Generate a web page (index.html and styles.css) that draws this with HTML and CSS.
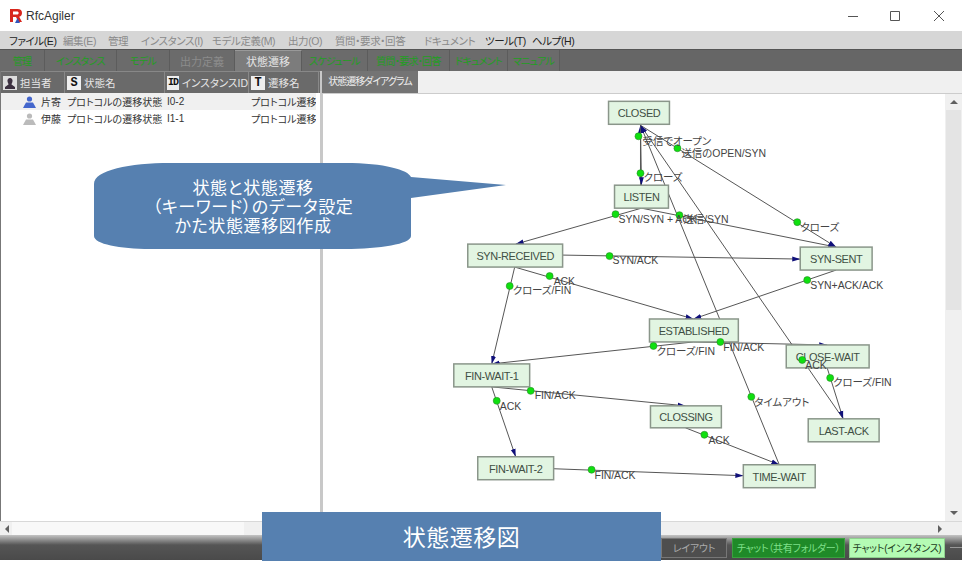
FILE: index.html
```html
<!DOCTYPE html>
<html>
<head>
    <meta charset="utf-8">
    <title>RfcAgiler</title>
    <link rel="stylesheet" href="styles.css">
</head>
<body>
<div class="window">
    <div class="titlebar">
        <svg class="logo" width="14" height="16" viewBox="0 0 14 16">
            <path d="M1 1h7.5c3 0 4.5 1.600 4.500 4 0 2-1 3.300-2.800 3.800L13 14H9.500L7 9H4v5H1z" fill="#d8261c"/>
            <path d="M4 3.500v3h4c1 0 1.700-.6 1.700-1.500S9 3.500 8 3.500z" fill="#fff"/>
            <path d="M6 15l2.500-5 2.500 5z" fill="#3355bb"/>
        </svg>
        <span class="app-name">RfcAgiler</span>
        <div class="window-buttons">
            <svg width="10" height="10" viewBox="0 0 10 10"><path d="M0 5.500h10" stroke="#555" fill="none"/></svg>
            <svg width="10" height="10" viewBox="0 0 10 10"><path d="M.5.500h9v9h-9z" stroke="#555" fill="none"/></svg>
            <svg width="10" height="10" viewBox="0 0 10 10"><path d="M0 0l10 10M10 0L0 10" stroke="#555" fill="none"/></svg>
        </div>
    </div>

    <div class="menubar">
        <span class="on">ファイル(E)</span>
        <span>編集(E)</span>
        <span>管理</span>
        <span>インスタンス(I)</span>
        <span>モデル定義(M)</span>
        <span>出力(O)</span>
        <span>質問・要求・回答</span>
        <span>ドキュメント</span>
        <span class="on">ツール(T)</span>
        <span class="on">ヘルプ(H)</span>
    </div>

    <div class="tabbar">
        <div class="tab">管理</div>
        <div class="tab">インスタンス</div>
        <div class="tab">モデル</div>
        <div class="tab disabled">出力定義</div>
        <div class="tab active">状態遷移</div>
        <div class="tab">スケジュール</div>
        <div class="tab">質問・要求・回答</div>
        <div class="tab">ドキュメント</div>
        <div class="tab">マニュアル</div>
    </div>

    <div class="main">
        <div class="left-pane">
            <div class="list-head">
                <div class="head-cell">
                    <svg class="head-icon" width="14" height="14" viewBox="0 0 14 14">
                        <rect width="14" height="14" fill="#ddd"/>
                        <path d="M7 2a2.500 2.500 0 0 1 2.500 3c0 1.500-1 2.500-1 3.500L12 11v2H2v-2l3.500-2.500c0-1-1-2-1-3.500A2.500 2.500 0 0 1 7 2z" fill="#3c3040"/>
                    </svg>
                    担当者
                </div>
                <div class="head-cell"><span class="head-badge">S</span>状態名</div>
                <div class="head-cell"><span class="head-badge small">ID</span>インスタンスID</div>
                <div class="head-cell"><span class="head-badge">T</span>遷移名</div>
            </div>
            <div class="list-row selected">
                <svg class="person" width="13" height="12" viewBox="0 0 13 12">
                    <circle cx="6.500" cy="3" r="2.600" fill="#4466cc"/>
                    <path d="M0 12l3-5.500h7l3 5.500z" fill="#4466cc"/>
                </svg>
                <span class="who">片寄</span>
                <span class="state">プロトコルの遷移状態</span>
                <span class="inst">I0-2</span>
                <span class="trans">プロトコル遷移</span>
            </div>
            <div class="list-row">
                <svg class="person" width="13" height="12" viewBox="0 0 13 12">
                    <circle cx="6.500" cy="3" r="2.600" fill="#bbb"/>
                    <path d="M0 12l3-5.500h7l3 5.500z" fill="#bbb"/>
                </svg>
                <span class="who">伊藤</span>
                <span class="state">プロトコルの遷移状態</span>
                <span class="inst">I1-1</span>
                <span class="trans">プロトコル遷移</span>
            </div>
        </div>

        <div class="right-pane">
            <div class="subtabs">
                <div class="subtab">状態遷移ダイアグラム</div>
            </div>
            <div class="diagram-wrap">
                <svg class="diagram" width="622" height="427" viewBox="323 94 622 427">
                    <defs>
                        <marker id="arrow" markerWidth="8" markerHeight="6" refX="8" refY="3" orient="auto" markerUnits="userSpaceOnUse">
                            <path d="M0 .5L8 3L0 5.500z" fill="#10107a"/>
                        </marker>
                    </defs>

                    <g class="edges">
                        <line x1="640" y1="185" x2="640" y2="125" marker-end="url(#arrow)"/>
                        <line x1="640" y1="125" x2="641" y2="185" marker-end="url(#arrow)"/>
                        <line x1="640" y1="125" x2="836" y2="247" marker-end="url(#arrow)"/>
                        <line x1="641" y1="208" x2="515" y2="244" marker-end="url(#arrow)"/>
                        <line x1="641" y1="208" x2="836" y2="247" marker-end="url(#arrow)"/>
                        <line x1="779" y1="465" x2="640" y2="125" marker-end="url(#arrow)"/>
                        <line x1="843" y1="419" x2="640" y2="125" marker-end="url(#arrow)"/>
                        <line x1="562" y1="255" x2="800" y2="259" marker-end="url(#arrow)"/>
                        <line x1="514" y1="267" x2="693" y2="319" marker-end="url(#arrow)"/>
                        <line x1="514" y1="267" x2="491" y2="364" marker-end="url(#arrow)"/>
                        <line x1="836" y1="270" x2="693" y2="319" marker-end="url(#arrow)"/>
                        <line x1="693" y1="342" x2="491" y2="364" marker-end="url(#arrow)"/>
                        <line x1="693" y1="342" x2="827" y2="345" marker-end="url(#arrow)"/>
                        <line x1="827" y1="368" x2="843" y2="419" marker-end="url(#arrow)"/>
                        <line x1="491" y1="387" x2="685" y2="406" marker-end="url(#arrow)"/>
                        <line x1="491" y1="387" x2="515" y2="457" marker-end="url(#arrow)"/>
                        <line x1="685" y1="428" x2="779" y2="465" marker-end="url(#arrow)"/>
                        <line x1="553" y1="469" x2="743" y2="476" marker-end="url(#arrow)"/>
                    </g>

                    <g class="nodes">
                        <rect x="608" y="101" width="61" height="23"/>
                        <rect x="614" y="185" width="54" height="23"/>
                        <rect x="467" y="244" width="95" height="23"/>
                        <rect x="800" y="247" width="72" height="23"/>
                        <rect x="649" y="319" width="89" height="23"/>
                        <rect x="786" y="345" width="83" height="23"/>
                        <rect x="453" y="364" width="76" height="23"/>
                        <rect x="650" y="406" width="71" height="22"/>
                        <rect x="477" y="457" width="76" height="23"/>
                        <rect x="743" y="465" width="72" height="23"/>
                        <rect x="808" y="419" width="71" height="23"/>
                    </g>

                    <g class="node-names">
                        <text x="638.500" y="117">CLOSED</text>
                        <text x="641" y="201">LISTEN</text>
                        <text x="514.500" y="260">SYN-RECEIVED</text>
                        <text x="836" y="263">SYN-SENT</text>
                        <text x="693.500" y="335">ESTABLISHED</text>
                        <text x="827.500" y="361">CLOSE-WAIT</text>
                        <text x="491" y="380">FIN-WAIT-1</text>
                        <text x="685.500" y="421">CLOSSING</text>
                        <text x="515" y="473">FIN-WAIT-2</text>
                        <text x="779" y="481">TIME-WAIT</text>
                        <text x="843.500" y="435">LAST-ACK</text>
                    </g>

                    <g class="dots">
                        <circle cx="638" cy="136" r="3.500"/>
                        <circle cx="677" cy="148" r="3.500"/>
                        <circle cx="640" cy="173" r="3.500"/>
                        <circle cx="615" cy="214" r="3.500"/>
                        <circle cx="679" cy="215" r="3.500"/>
                        <circle cx="797" cy="222" r="3.500"/>
                        <circle cx="609" cy="256" r="3.500"/>
                        <circle cx="549" cy="276" r="3.500"/>
                        <circle cx="509" cy="286" r="3.500"/>
                        <circle cx="807" cy="280" r="3.500"/>
                        <circle cx="653" cy="346" r="3.500"/>
                        <circle cx="720" cy="342" r="3.500"/>
                        <circle cx="802" cy="360" r="3.500"/>
                        <circle cx="830" cy="378" r="3.500"/>
                        <circle cx="530" cy="391" r="3.500"/>
                        <circle cx="496" cy="401" r="3.500"/>
                        <circle cx="751" cy="397" r="3.500"/>
                        <circle cx="704" cy="435" r="3.500"/>
                        <circle cx="591" cy="470" r="3.500"/>
                    </g>

                    <g class="edge-names">
                        <text x="642" y="145">受信でオープン</text>
                        <text x="681" y="157">送信のOPEN/SYN</text>
                        <text x="643" y="181">クローズ</text>
                        <text x="618" y="223">SYN/SYN + ACK</text>
                        <text x="683" y="223">送信/SYN</text>
                        <text x="800" y="231">クローズ</text>
                        <text x="612" y="264">SYN/ACK</text>
                        <text x="553" y="285">ACK</text>
                        <text x="512" y="294">クローズ/FIN</text>
                        <text x="810" y="289">SYN+ACK/ACK</text>
                        <text x="656" y="355">クローズ/FIN</text>
                        <text x="723" y="351">FIN/ACK</text>
                        <text x="805" y="369">ACK</text>
                        <text x="833" y="386">クローズ/FIN</text>
                        <text x="534" y="399">FIN/ACK</text>
                        <text x="499" y="410">ACK</text>
                        <text x="754" y="406">タイムアウト</text>
                        <text x="708" y="444">ACK</text>
                        <text x="594" y="479">FIN/ACK</text>
                    </g>
                </svg>
                <div class="vscroll">
                    <div class="scroll-btn"><span class="arrow-up"></span></div>
                    <div class="vthumb"></div>
                    <div class="vtrack"></div>
                    <div class="scroll-btn"><span class="arrow-down"></span></div>
                </div>
            </div>
        </div>
    </div>

    <div class="hscrolls">
        <div class="hscroll left">
            <span class="arrow-left"></span>
            <div class="hthumb"></div>
        </div>
        <div class="hscroll right">
            <span class="arrow-right"></span>
        </div>
    </div>

    <div class="statusbar">
        <div class="status-btn">レイアウト</div>
        <div class="status-btn chat">チャット（共有フォルダー）</div>
        <div class="status-btn chat-light">チャット(インスタンス)</div>
        <div class="status-dash"></div>
    </div>
</div>

<svg class="callout" width="414" height="88" viewBox="94 162 414 88">
    <path d="M94 184C94 170 130 163 170 163H345C385 163 408 170 411 177L506 185L411 198V236C411 244 380 249 345 249H150C120 249 94 244 94 236z" fill="#5680b0"/>
    <text x="253" y="194">状態と状態遷移</text>
    <text x="253" y="213">（キーワード）のデータ設定</text>
    <text x="253" y="232">かた状態遷移図作成</text>
</svg>

<div class="banner">状態遷移図</div>
</body>
</html>
```

FILE: styles.css
```css
html, body {
    margin: 0;
    padding: 0;
    background-color: #fff;
}

body {
    width: 962px;
    height: 563px;
    overflow: hidden;
    position: relative;
    font-family: "Liberation Sans", "Noto Sans CJK JP", sans-serif;
    font-feature-settings: "palt";
    font-size: 11px;
    color: #333;
}

.window {
    display: flex;
    flex-direction: column;
    height: 560px;
}

/* title */
.titlebar {
    display: flex;
    align-items: center;
    height: 31px;
    padding-left: 9px;
    flex-shrink: 0;
}

.logo {
    margin-right: 3px;
}

.app-name {
    font-size: 12px;
}

.window-buttons {
    margin-left: auto;
    display: grid;
    grid-template-columns: 42px 44px 10px;
    padding-right: 18px;
}

/* menu */
.menubar {
    display: grid;
    grid-template-columns: 54px 45px 33px 71px 76px 47px 89px 61px 47px 60px;
    align-items: center;
    height: 18px;
    padding-left: 9px;
    background-color: #d6d6d6;
    color: #8a8a8a;
    font-size: 10.5px;
    letter-spacing: -0.4px;
    white-space: nowrap;
    flex-shrink: 0;
}

.menubar .on {
    color: #222;
}

/* top tabs */
.tabbar {
    display: grid;
    grid-template-columns: 45px 72px 53px 65px 67px 66px 82px 58px 52px;
    height: 22px;
    background-color: #666;
    border-top: 1px solid #555;
    box-sizing: border-box;
    flex-shrink: 0;
}

.tab {
    display: flex;
    align-items: center;
    justify-content: center;
    color: #1f9e1f;
    background-color: #6b6b6b;
    border-right: 1px solid #5c5c5c;
    white-space: nowrap;
    font-size: 10px;
    letter-spacing: -0.7px;
}

.tab.disabled {
    color: #8c8c8c;
    font-size: 11px;
    letter-spacing: 0;
}

.tab.active {
    color: #e4e4e4;
    background-color: #7c7c7c;
    border-top: 1px solid #999;
    font-size: 11px;
    letter-spacing: 0;
}

/* panes */
.main {
    display: flex;
    flex: 1;
    min-height: 0;
    border-left: 1px solid #777;
}

.left-pane {
    width: 319px;
    border-right: 3px solid #c8c8c8;
    flex-shrink: 0;
}

.list-head {
    display: grid;
    grid-template-columns: 64px 100px 84px 70px;
    height: 22px;
    background-color: #6a6a6a;
    color: #e6e6e6;
    font-size: 10.5px;
    border-top: 1px solid #888;
    box-sizing: border-box;
}

.head-cell {
    display: flex;
    align-items: center;
    padding-left: 2px;
    border-right: 1px solid #888;
    white-space: nowrap;
}

.head-icon {
    margin-right: 3px;
}

.head-badge {
    display: inline-block;
    width: 14px;
    height: 14px;
    line-height: 14px;
    margin-right: 3px;
    text-align: center;
    background-color: #eee;
    color: #111;
    font-weight: bold;
    font-size: 12px;
    font-family: "Liberation Mono", monospace;
}

.head-badge.small {
    font-size: 10px;
    letter-spacing: -1px;
}

.list-row {
    display: grid;
    grid-template-columns: 18px 26px 100px 84px auto;
    align-items: center;
    height: 17px;
    padding-left: 22px;
    margin-right: 4px;
    color: #333;
    font-size: 10px;
    white-space: nowrap;
    overflow: hidden;
}

.list-row.selected {
    background-color: #f0f0f0;
}

.right-pane {
    flex: 1;
    display: flex;
    flex-direction: column;
    min-width: 0;
}

.subtabs {
    height: 23px;
    background-color: #f0f0f0;
    border-bottom: 1px solid #ccc;
    box-sizing: border-box;
    flex-shrink: 0;
}

.subtab {
    width: 96px;
    height: 22px;
    line-height: 22px;
    margin-left: -1px;
    text-align: center;
    background-color: #747474;
    color: #eee;
    font-size: 10px;
    letter-spacing: -1px;
    white-space: nowrap;
}

.diagram-wrap {
    display: flex;
    flex: 1;
    min-height: 0;
    padding-left: 1px;
}

.diagram {
    display: block;
    flex: 1;
}

.edges line {
    stroke: #555;
    stroke-width: 1;
}

.nodes rect {
    fill: #e2f5e2;
    stroke: #8a968a;
    stroke-width: 1.5;
}

.node-names text {
    text-anchor: middle;
    font-size: 11px;
    letter-spacing: -0.4px;
    fill: #3f4f44;
}

.dots circle {
    fill: #0fe00f;
    stroke: #2a8a2a;
    stroke-width: 0.6;
}

.edge-names text {
    font-size: 10.5px;
    letter-spacing: -0.05px;
    fill: #444;
}

/* scrollbars */
.vscroll {
    display: flex;
    flex-direction: column;
    width: 17px;
    flex-shrink: 0;
    background-color: #f0f0f0;
}

.scroll-btn {
    display: flex;
    align-items: center;
    justify-content: center;
    height: 16px;
}

.vthumb {
    height: 200px;
    background-color: #e4e4e4;
    margin: 0 1px;
}

.vtrack {
    flex: 1;
}

.arrow-up, .arrow-down, .arrow-left, .arrow-right {
    display: block;
    width: 0;
    height: 0;
    border-style: solid;
    border-color: transparent;
}

.arrow-up {
    border-width: 0 4px 4px;
    border-bottom-color: #606060;
}

.arrow-down {
    border-width: 4px 4px 0;
    border-top-color: #606060;
}

.arrow-left {
    border-width: 4px 4px 4px 0;
    border-right-color: #606060;
    margin-left: 5px;
}

.arrow-right {
    border-width: 4px 0 4px 4px;
    border-left-color: #606060;
    margin-left: auto;
    margin-right: 20px;
}

.hscrolls {
    display: flex;
    height: 14px;
    flex-shrink: 0;
    background-color: #f0f0f0;
    border-top: 1px solid #d8d8d8;
    box-sizing: border-box;
}

.hscroll {
    display: flex;
    align-items: center;
}

.hscroll.left {
    width: 320px;
}

.hscroll.right {
    flex: 1;
}

.hthumb {
    width: 232px;
    height: 100%;
    margin-left: 3px;
    background-color: #f8f8f8;
}

/* bottom bar */
.statusbar {
    display: flex;
    align-items: center;
    justify-content: flex-end;
    gap: 5px;
    height: 25px;
    flex-shrink: 0;
    background: linear-gradient(#c4c4c4 0, #555 10px, #4a4a4a 100%);
}

.status-btn {
    height: 20px;
    line-height: 20px;
    padding: 0 5px;
    box-sizing: border-box;
    white-space: nowrap;
    background-color: #4e4e4e;
    color: #aaa;
    border: 1px solid #777;
    font-size: 10px;
    letter-spacing: -0.3px;
}

.status-btn:first-child {
    width: 66px;
    text-align: center;
}

.status-btn.chat {
    width: 113px;
    padding: 0;
    text-align: center;
    background-color: #1f8a28;
    color: #7fe08a;
    border-color: #3aa03f;
}

.status-btn.chat-light {
    width: 96px;
    padding: 0;
    text-align: center;
    background-color: #b4fbb4;
    color: #1c3c1c;
    border-color: #8fd08f;
    margin-left: -1px;
}

.status-dash {
    width: 12px;
    height: 1px;
    background-color: #999;
}

/* slide annotations lying over the screenshot */
.callout {
    position: absolute;
    left: 94px;
    top: 162px;
}

.callout text {
    text-anchor: middle;
    fill: #fff;
    font-size: 17px;
    letter-spacing: 0.6px;
    font-family: "Noto Sans CJK JP", sans-serif;
}

.banner {
    position: absolute;
    left: 262px;
    top: 512px;
    width: 399px;
    height: 49px;
    line-height: 49px;
    text-align: center;
    background-color: #5680b0;
    color: #fff;
    font-size: 23px;
    letter-spacing: 0.5px;
    font-family: "Noto Sans CJK JP", sans-serif;
}
```
